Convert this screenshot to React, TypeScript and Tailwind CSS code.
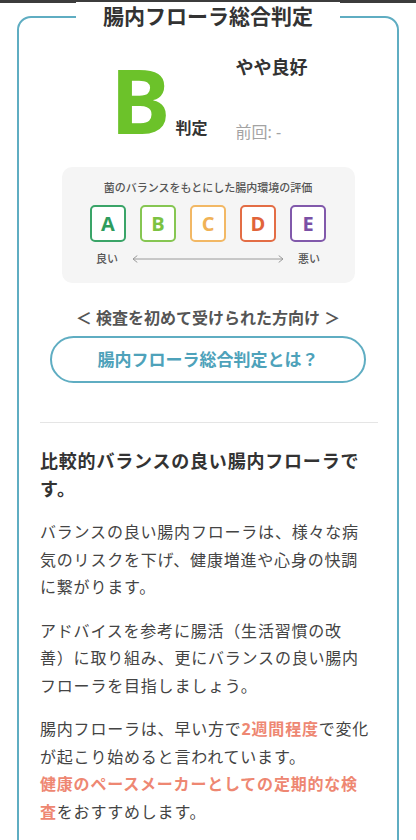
import React from 'react';

const JP = "font-['Noto_Sans','Noto_Sans_CJK_JP',sans-serif]";

const grades = [
  { label: 'A', color: 'text-[#2e9c5d] border-[#3aa468]' },
  { label: 'B', color: 'text-[#7cc242] border-[#86c652]' },
  { label: 'C', color: 'text-[#f0b257] border-[#f2b865]' },
  { label: 'D', color: 'text-[#e1643a] border-[#e36d45]' },
  { label: 'E', color: 'text-[#7a50a5] border-[#8159ab]' },
];

const RangeArrow: React.FC = () => (
  <svg width="152" height="8" viewBox="0 0 152 8" fill="none" className="text-[#9a9a9a]">
    <path d="M1 4H151" stroke="currentColor" strokeWidth="1" />
    <path d="M5 0.8L1 4L5 7.2" stroke="currentColor" strokeWidth="1" strokeLinecap="round" />
    <path d="M147 0.8L151 4L147 7.2" stroke="currentColor" strokeWidth="1" strokeLinecap="round" />
  </svg>
);

const App: React.FC = () => {
  return (
    <div className={`w-[416px] h-[840px] overflow-hidden bg-white ${JP}`}>
      <div className="h-[3px] bg-[#3c3c3c]" />

      {/* Result card */}
      <div className="relative mx-[17px] mt-[13px] border-2 border-[#5fadc2] rounded-[14px] pb-10">
        <h2 className="absolute left-1/2 -translate-x-1/2 -top-[16px] bg-white px-[27px] text-[21px] leading-[28px] font-bold text-[#333] whitespace-nowrap">
          腸内フローラ総合判定
        </h2>

        {/* Grade */}
        <div className="flex justify-center pt-[36px] pl-[2px]">
          <div className="flex items-baseline">
            <span className="font-['Noto_Sans',sans-serif] font-bold text-[90px] leading-[90px] text-[#6cc22a]">B</span>
            <span className="ml-[5px] text-[16px] font-bold text-[#333]">判定</span>
          </div>
          <div className="ml-[28px] h-[90px] flex flex-col justify-between">
            <span className="text-[18px] leading-[26px] font-bold text-[#333]">やや良好</span>
            <span className="text-[16px] leading-[24px] text-[#a3a3a3]">前回: -</span>
          </div>
        </div>

        {/* Scale */}
        <div className="mx-auto mt-[23px] w-[293px] rounded-[10px] bg-[#f5f5f5] pt-[13px] pb-[16px]">
          <p className="text-center text-[11px] leading-[16px] font-medium text-[#555]">菌のバランスをもとにした腸内環境の評価</p>
          <div className="mt-[9px] flex justify-center gap-[14px]">
            {grades.map((g) => (
              <div
                key={g.label}
                className={`w-[36px] h-[37px] rounded-[5px] border-2 bg-white flex items-center justify-center font-['Open_Sans',sans-serif] font-bold text-[20px] ${g.color}`}
              >
                {g.label}
              </div>
            ))}
          </div>
          <div className="mt-[9px] flex items-center justify-center gap-[14px] text-[11px] leading-[16px] font-medium text-[#555]">
            <span>良い</span>
            <RangeArrow />
            <span>悪い</span>
          </div>
        </div>

        <p className="mt-[23px] text-center text-[16px] leading-[24px] font-bold text-[#555]">＜ 検査を初めて受けられた方向け ＞</p>

        <button className="mx-auto mt-[6px] flex w-[316px] h-[47px] items-center justify-center rounded-full border-2 border-[#5fadc2] text-[17px] font-bold text-[#4ea2ba]">
          腸内フローラ総合判定とは？
        </button>

        {/* Description */}
        <div className="mt-[39px] ml-[21px] mr-[19px] border-t border-[#e5e5e5] pt-[24px] tracking-[0.05em] [text-spacing-trim:space-all]">
          <div className="mr-[6px]">
            <h3 className="text-[18px] leading-[28px] font-bold text-[#333]">比較的バランスの良い腸内フローラです。</h3>
            <p className="mt-4 text-[16px] leading-[27.5px] text-[#444]">
              バランスの良い腸内フローラは、様々な病気のリスクを下げ、健康増進や心身の快調に繋がります。
            </p>
            <p className="mt-4 text-[16px] leading-[27.5px] text-[#444]">
              アドバイスを参考に腸活（生活習慣の改善）に取り組み、更にバランスの良い腸内フローラを目指しましょう。
            </p>
            <p className="mt-4 text-[16px] leading-[27.5px] text-[#444]">
              腸内フローラは、早い方で<span className="font-bold text-[#ee8772]">2週間程度</span>で変化が起こり始めると言われています。
              <br />
              <span className="font-bold text-[#ee8772]">健康のペースメーカーとしての定期的な検査</span>をおすすめします。
            </p>
          </div>
        </div>
      </div>
    </div>
  );
};

export default App;
